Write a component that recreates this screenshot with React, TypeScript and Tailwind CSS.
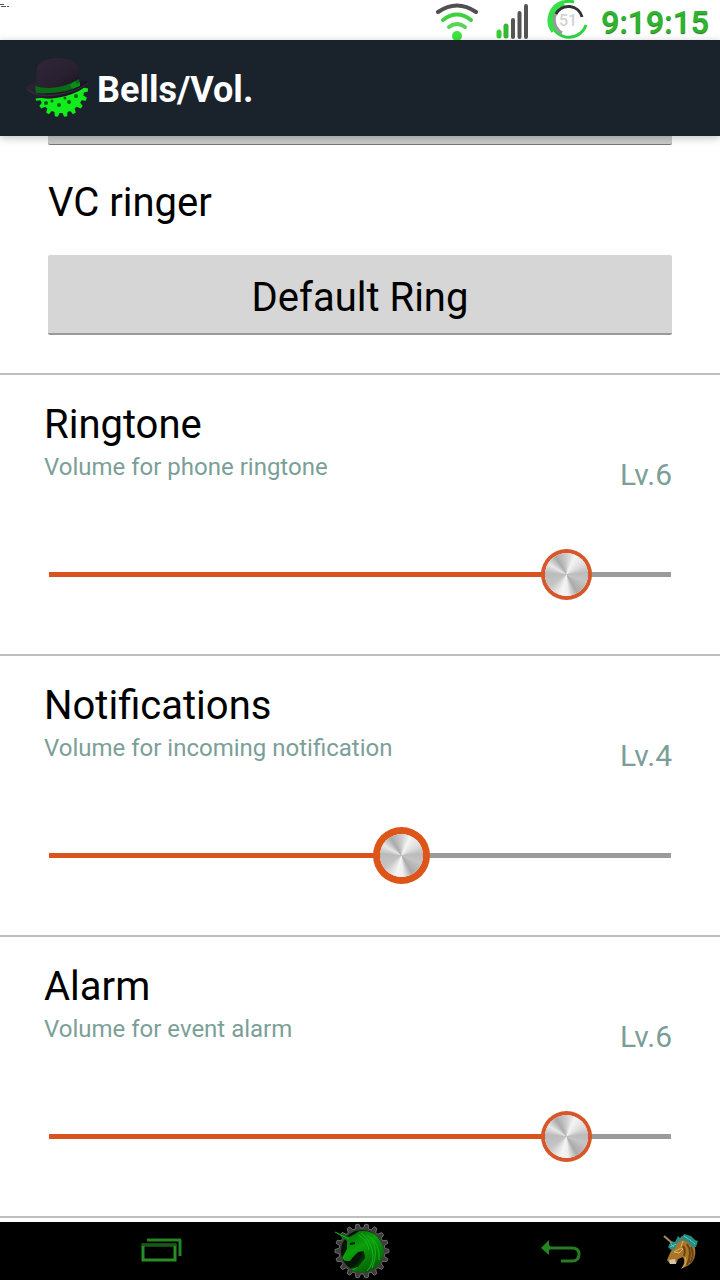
import { useState } from 'react';

type Volume = { id: string; title: string; hint: string; level: number; held?: boolean };

const MAX_LEVEL = 7;

const VOLUMES: Volume[] = [
  { id: 'ringtone', title: 'Ringtone', hint: 'Volume for phone ringtone', level: 6 },
  { id: 'notifications', title: 'Notifications', hint: 'Volume for incoming notification', level: 4, held: true },
  { id: 'alarm', title: 'Alarm', hint: 'Volume for event alarm', level: 6 },
];

function gearPath(cx: number, cy: number, outer: number, inner: number, teeth: number) {
  const step = (Math.PI * 2) / teeth;
  const at = (r: number, a: number) => `${(cx + r * Math.cos(a)).toFixed(2)} ${(cy + r * Math.sin(a)).toFixed(2)}`;
  let d = '';
  for (let i = 0; i < teeth; i++) {
    const a = i * step;
    d += `${i ? 'L' : 'M'}${at(inner, a - step * 0.32)}L${at(outer, a - step * 0.17)}L${at(outer, a + step * 0.17)}L${at(inner, a + step * 0.32)}`;
  }
  return d + 'Z';
}

function WifiIcon() {
  return (
    <svg width="44" height="40" viewBox="0 0 44 40" fill="none" strokeLinecap="round" aria-hidden="true">
      <path d="M3 12Q22 -1 41 12" stroke="#505050" strokeWidth="4" />
      <path d="M8 20Q22 9 36 20" stroke="#3fd03f" strokeWidth="4" />
      <path d="M14 27Q22 21 30 27" stroke="#55d655" strokeWidth="4" />
      <circle cx="22" cy="36" r="5" fill="#3fe43f" />
    </svg>
  );
}

function SignalIcon() {
  return (
    <svg width="34" height="40" viewBox="0 0 34 40" fill="none" strokeLinecap="round" strokeWidth="4" aria-hidden="true">
      <path d="M4 32V36" stroke="#35ce35" strokeWidth="5" />
      <path d="M11 26V36" stroke="#35b935" strokeWidth="5" />
      <path d="M18 20V37M24.500 13V37M31 6V37" stroke="#555" />
    </svg>
  );
}

function BatteryIcon() {
  return (
    <svg width="42" height="40" viewBox="0 0 42 40" fill="none" aria-hidden="true">
      <path d="M27 2A18 18 0 1 0 39 25" stroke="#2bd640" strokeWidth="3" />
      <path d="M17 3A18 18 0 0 0 7 31" stroke="#37df4b" strokeWidth="6" />
      <path d="M15 33A15 15 0 0 1 9 13" stroke="#999" strokeWidth="3" />
      <path d="M9 14A14 14 0 0 1 35 17" stroke="#333" strokeWidth="3" />
      <text x="21" y="26" textAnchor="middle" fontSize="16" fontWeight="500" fill="#d2d2d2">51</text>
    </svg>
  );
}

function HatLogo() {
  return (
    <svg className="shrink-0" width="64" height="60" viewBox="0 0 64 60" aria-hidden="true">
      <defs>
        <linearGradient id="felt" x1="0" y1="0" x2="1" y2="1">
          <stop offset="0" stopColor="#30283a" />
          <stop offset="0.5" stopColor="#292030" />
          <stop offset="1" stopColor="#100b17" />
        </linearGradient>
        <clipPath id="below-brim">
          <path d="M6 41L31 38L58 29H64V60H0Z" />
        </clipPath>
      </defs>
      <g clipPath="url(#below-brim)">
        <path d={gearPath(35, 32, 27, 23, 18)} fill="#13ec1b" />
      </g>
      <path d="M1 32Q-1 30 3 27L10 25L11 9Q14 1 31 0Q50 0 52 10L54 23Q63 21 62 26Q53 36 30 40Q10 43 1 32Z" fill="url(#felt)" />
      <g fill="#075c12">
        <circle cx="20" cy="45" r="2" /><circle cx="26" cy="43" r="1.500" /><circle cx="33" cy="47" r="2" />
        <circle cx="43" cy="44" r="2" /><circle cx="39" cy="40" r="1.500" /><circle cx="50" cy="38" r="2" />
      </g>
      <path d="M9 28Q31 34 53 21L54 27Q39 37 10 35Z" fill="#086b16" />
      <path d="M44 27L49 23L51 26L54 24V28L46 31Z" fill="#0b8f1c" />
      <path d="M1 31Q11 40 30 37Q53 33 62 25" fill="none" stroke="#3a2f42" strokeWidth="1" />
    </svg>
  );
}

function RecentsIcon() {
  return (
    <svg width="44" height="30" viewBox="0 0 44 30" fill="none" aria-hidden="true">
      <path d="M7 4H41M40 4V20" stroke="#268324" strokeWidth="3" />
      <rect x="3" y="9" width="32" height="15" stroke="#278d25" strokeWidth="3" />
      <path d="M2 9H36" stroke="#175a16" strokeWidth="2" />
    </svg>
  );
}

function HomeIcon() {
  return (
    <svg width="56" height="56" viewBox="0 0 56 56" aria-hidden="true">
      <defs>
        <linearGradient id="mane" x1="0" y1="0" x2="0.7" y2="1">
          <stop offset="0" stopColor="#045707" />
          <stop offset="0.5" stopColor="#0ba00c" />
          <stop offset="1" stopColor="#065e06" />
        </linearGradient>
      </defs>
      <path d={gearPath(28, 28, 27, 23, 18)} fill="#3c3e3c" stroke="#6b6d6b" strokeLinejoin="round" />
      <circle cx="28" cy="28" r="21" fill="#041405" />
      <path d="M1 9L15 14L21 11L25 8Q40 6 47 19Q53 29 46 40Q40 48 31 49Q23 50 15 46Q26 43 29 35L30 28L24 29L19 34L16 38L11 38L8 35L13 26L13 18Z" fill="url(#mane)" />
      <path d="M1 9L15 16M30 28Q30 41 19 47M33 12Q47 20 45 37M38 17Q45 28 38 45M27 10Q38 18 39 32Q39 42 33 48M24 12Q33 16 35 27" fill="none" stroke="#13b516" />
      <path d="M30 28L31 35L24 44L15 46Q27 40 28 29Z" fill="#022b04" />
      <path d="M16 21L21 20" stroke="#011b02" strokeWidth="2" />
    </svg>
  );
}

function BackIcon() {
  return (
    <svg width="42" height="26" viewBox="0 0 42 26" fill="none" aria-hidden="true">
      <path d="M8 10H31Q38 10 38 16Q38 23 31 23H20" stroke="#247d21" strokeWidth="3" />
      <path d="M0 10L8 2V7L11 10L8 12V17Z" fill="#258521" />
    </svg>
  );
}

function UnicornIcon() {
  return (
    <svg width="38" height="38" viewBox="0 0 38 38" aria-hidden="true">
      <path d="M20 4Q32 7 33 16Q35 27 27 33L19 37Q24 30 21 25L16 27L14 32L8 32L5 28L8 21L12 14L17 7Z" fill="#a87529" />
      <path d="M25 12Q31 20 25 33M22 24Q24 18 21 14M29 15Q33 23 28 31" fill="none" stroke="#6b4212" strokeWidth="2" />
      <path d="M12 20L19 16L21 17L17 21ZM21 9L19 15M23 25Q26 31 20 36" fill="none" stroke="#e0b266" strokeWidth="1" />
      <path d="M7 28L13 27L14 32H8Z" fill="#d4c7ae" />
      <path d="M6 15L9 9L13 10L16 4L19 7L22 2L29 4L33 8L36 9L34 15L30 15L26 10L20 8L15 11L13 17L9 18Z" fill="#238d86" />
      <path d="M9 12L12 15M22 4L28 8L33 12M8 15L14 12" stroke="#62cbc0" strokeWidth="1" />
      <path d="M2 4L10 11" stroke="#a88968" strokeWidth="2" />
    </svg>
  );
}

function VolumeRow({ id, title, hint, level, held }: Volume) {
  const [value, setValue] = useState(level);
  const travel = value / MAX_LEVEL;
  return (
    <section className="border-t-2 border-[#bebebe] px-11 pt-[26px] pb-[49px]">
      <label htmlFor={id} className="block text-[40px] leading-[48px]">{title}</label>
      <div className="flex h-11 justify-between pr-1 text-[#7b9f98]">
        <p className="text-2xl leading-9">{hint}</p>
        <output htmlFor={id} className="self-end text-[30px] leading-9">Lv.{value}</output>
      </div>
      <div className="mt-[51px] flex h-[61px] items-center px-[5px]">
        <input
          id={id}
          type="range"
          min={0}
          max={MAX_LEVEL}
          value={value}
          onChange={(e) => setValue(Number(e.target.value))}
          style={{ backgroundSize: `${travel * 100}% 5px, 100% 5px` }}
          className={
            "h-[43px] w-full appearance-none bg-[linear-gradient(#d9531e,#d9531e),linear-gradient(#9b9b9b,#9b9b9b)] bg-left bg-no-repeat [&::-webkit-slider-thumb]:size-[43px] [&::-webkit-slider-thumb]:appearance-none [&::-webkit-slider-thumb]:rounded-full [&::-webkit-slider-thumb]:bg-[conic-gradient(#ccc,#f4f4f4_25deg,#ddd_60deg,#bbb_85deg,#c5c5c5_110deg,#aaa_150deg,#eee_175deg,#f5f5f5_195deg,#c4c4c4_235deg,#bbb_275deg,#e8e8e8_300deg,#aaa_328deg,#ccc)] " +
            (held
              ? "[&::-webkit-slider-thumb]:shadow-[0_0_0_7px_#dd5519]"
              : "[&::-webkit-slider-thumb]:shadow-[0_0_0_4px_#d6572a]")
          }
        />
      </div>
    </section>
  );
}

export default function App() {
  return (
    <div className="flex min-h-screen flex-col overflow-hidden bg-white font-['Roboto',sans-serif] text-black">
      <div className="flex h-10 items-center justify-between bg-white pr-[11px]">
        <svg className="self-start" width="16" height="10" viewBox="0 0 16 10" aria-hidden="true">
          <path d="M0 4.500H4M1 6.500H6M7 6.500H9" stroke="#555" />
        </svg>
        <div className="flex items-center">
          <WifiIcon />
          <div className="ml-4 flex"><SignalIcon /></div>
          <div className="ml-[18px] flex"><BatteryIcon /></div>
          <time className="ml-3 pt-1 text-[32px] leading-9 font-medium text-[#2db52d] [text-shadow:0_1px_1px_#176f17]">9:19:15</time>
        </div>
      </div>

      <header className="relative flex h-24 items-center bg-[#1a222b] pl-[26px] shadow-[0_2px_8px_#00000040]">
        <HatLogo />
        <h1 className="ml-[7px] pt-1 text-[36px] leading-10 font-bold text-white">Bells/Vol.</h1>
      </header>

      <main className="flex-1">
        <div className="px-12">
          <div className="h-[9px] rounded-b-xs border-b border-[#777] bg-[#cbcbcb]" />
          <h2 className="pt-[34px] text-[40px] leading-[48px]">VC ringer</h2>
          <button type="button" className="mt-7 mb-[38px] block h-20 w-full rounded-xs border-b-2 border-[#9a9a9a] bg-[#d6d6d6] pt-2 text-[40px] leading-[48px]">
            Default Ring
          </button>
        </div>
        {VOLUMES.map((v) => <VolumeRow key={v.id} {...v} />)}
        <div className="border-t-2 border-[#bebebe]" />
      </main>

      <nav className="grid h-[58px] grid-cols-[1fr_1fr_1fr_auto] items-center bg-black pr-5 pl-[62px]">
        <button type="button" aria-label="Recent apps" className="justify-self-center"><RecentsIcon /></button>
        <button type="button" aria-label="Home" className="justify-self-center"><HomeIcon /></button>
        <button type="button" aria-label="Back" className="justify-self-center"><BackIcon /></button>
        <button type="button" aria-label="Menu"><UnicornIcon /></button>
      </nav>
    </div>
  );
}
